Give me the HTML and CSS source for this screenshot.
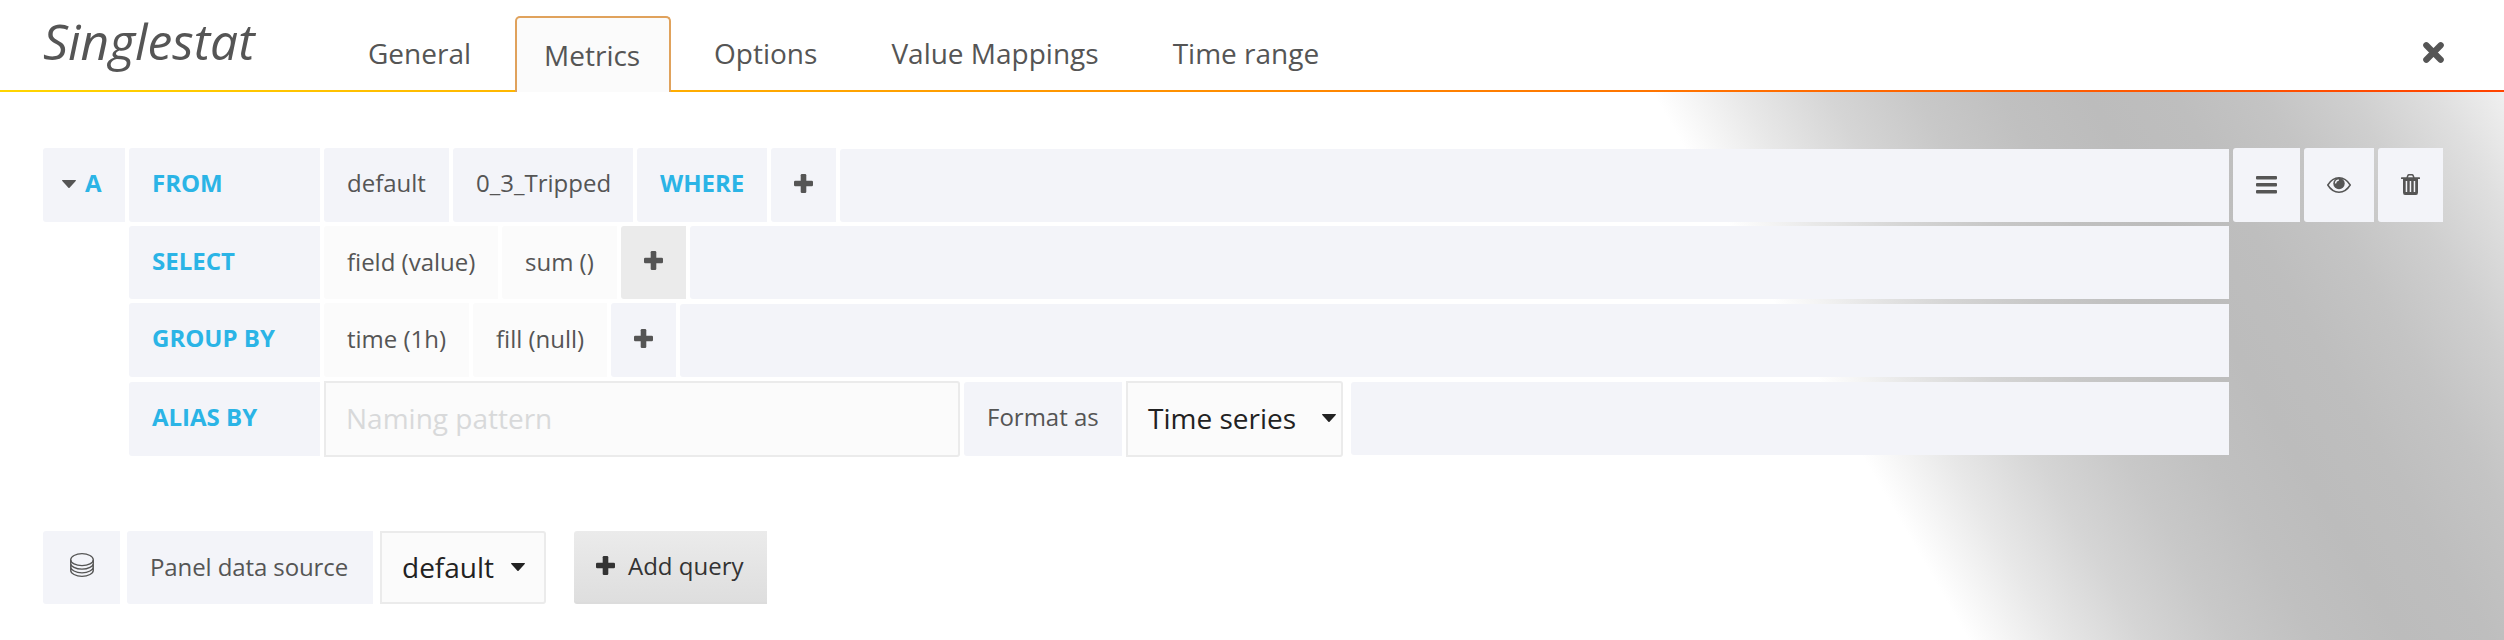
FILE: index.html
```html
<!DOCTYPE html>
<html lang="en">
<head>
  <meta charset="UTF-8">
  <title>Singlestat</title>
  <link rel="stylesheet" href="styles.css">
</head>
<body>

<svg class="sprite">
  <symbol id="plus" viewBox="0 0 19 19">
    <rect x="0" y="6.7" width="19" height="5.6" rx="1.3"/>
    <rect x="6.7" y="0" width="5.6" height="19" rx="1.3"/>
  </symbol>
  <symbol id="caret" viewBox="0 0 14 8">
    <path d="M.6 0h12.8q1 .2.3 1L7.6 7.7q-.6.5-1.2 0L.3 1Q-.4.2.6 0z"/>
  </symbol>
</svg>

<header class="editor-header">
  <h2 class="editor-title">Singlestat</h2>
  <nav class="tabs">
    <a class="tab">General</a>
    <a class="tab active">Metrics</a>
    <a class="tab">Options</a>
    <a class="tab">Value Mappings</a>
    <a class="tab">Time range</a>
  </nav>
  <svg class="close" viewBox="0 0 23 23"><path d="M4.3 4.3l14.4 14.4M18.7 4.3L4.3 18.7"/></svg>
</header>

<main class="editor-body">
  <div class="query">
    <div class="cell letter"><svg class="caret"><use href="#caret"/></svg>A</div>
    <div class="rows">
      <div class="row">
        <div class="cell keyword">FROM</div>
        <div class="cell w-policy">default</div>
        <div class="cell w-measure">0_3_Tripped</div>
        <div class="cell w-where keyword">WHERE</div>
        <div class="cell add"><svg class="plus"><use href="#plus"/></svg></div>
        <div class="cell fill short-top"></div>
      </div>
      <div class="row row-select">
        <div class="cell keyword">SELECT</div>
        <div class="cell part w-field">field (value)</div>
        <div class="cell part w-sum">sum ()</div>
        <div class="cell add hover"><svg class="plus"><use href="#plus"/></svg></div>
        <div class="cell fill"></div>
      </div>
      <div class="row">
        <div class="cell keyword">GROUP BY</div>
        <div class="cell part w-time">time (1h)</div>
        <div class="cell part w-null">fill (null)</div>
        <div class="cell add"><svg class="plus"><use href="#plus"/></svg></div>
        <div class="cell fill short-top"></div>
      </div>
      <div class="row row-alias">
        <div class="cell keyword">ALIAS BY</div>
        <input class="alias" type="text" placeholder="Naming pattern">
        <div class="cell w-format">Format as</div>
        <div class="select w-series">Time series<svg class="caret"><use href="#caret"/></svg></div>
        <div class="cell fill short-bottom"></div>
      </div>
    </div>
    <div class="actions">
      <div class="cell action-menu">
        <svg width="21" height="18" viewBox="0 0 21 18"><path d="M1 0h19q1 0 1 1v1.500q0 1-1 1H1q-1 0-1-1V1q0-1 1-1zM1 7h19q1 0 1 1v1.500q0 1-1 1H1q-1 0-1-1V8q0-1 1-1zM1 14h19q1 0 1 1v1.500q0 1-1 1H1q-1 0-1-1V15q0-1 1-1z"/></svg>
      </div>
      <div class="cell action-eye">
        <svg width="24" height="16" viewBox="0 0 24 16"><path class="line" d="M.8 8Q5.200.8 12 .8T23.200 8Q18.800 15.200 12 15.200T.8 8z"/><circle cx="12" cy="6.500" r="5.700"/><path class="glint" d="M8.500 6.500Q8.700 3.300 11.800 3"/></svg>
      </div>
      <div class="cell action-trash">
        <svg width="19" height="21" viewBox="0 0 19 21"><path class="line" d="M6 4l.8-2.300q.3-.9 1.200-.9h3q.9 0 1.200.9L13 4"/><path fill-rule="evenodd" d="M.5 3.300h18q.5 0 .5.500v.7q0 .5-.5.500H17v13.500q0 2.500-2 2.500H4q-2 0-2-2.500V5H.5Q0 5 0 4.500v-.7q0-.5.500-.5zM4.700 7v11h1.500V7zM8.700 7v11h1.500V7zM12.700 7v11h1.500V7z"/></svg>
      </div>
    </div>
  </div>

  <div class="footer">
    <div class="cell source-icon">
      <svg width="24" height="24" viewBox="0 0 24 24"><ellipse cx="12" cy="6.700" rx="11.300" ry="6"/><path d="M.7 6.700v3.500c0 3.300 5.100 6 11.300 6s11.300-2.700 11.300-6V6.700M.7 10.500v3.300c0 3.300 5.100 6 11.300 6s11.300-2.700 11.300-6v-3.300M.7 14v3.300c0 3.300 5.100 6 11.300 6s11.300-2.700 11.300-6V14"/></svg>
    </div>
    <div class="cell source-label">Panel data source</div>
    <div class="select w-source">default<svg class="caret"><use href="#caret"/></svg></div>
    <button class="add-query"><svg class="plus"><use href="#plus"/></svg>Add query</button>
  </div>
</main>

</body>
</html>
```

FILE: styles.css
```css
* {
  box-sizing: border-box;
}

body {
  margin: 0;
  height: 640px;
  overflow: hidden;
  font-family: "Open Sans", "Noto Sans", sans-serif;
  font-size: 24px;
  color: #555;
  background: #fff;
}

svg {
  display: block;
  flex: none;
  fill: currentColor;
}

.sprite {
  display: none;
}

/* Header */
.editor-header {
  display: flex;
  height: 92px;
  padding: 0 59px 0 43px;
  border-bottom: 2px solid;
  border-image: linear-gradient(to right, #ffd500 0%, #ff4400 99%, #ff4400 100%) 1;
}

.editor-title {
  width: 272px;
  margin: 0;
  font-size: 49.7px;
  font-style: italic;
  font-weight: 400;
  line-height: 83px;
}

.tabs {
  display: flex;
  flex: 1;
  font-size: 28px;
  line-height: 40px;
}

.tab {
  height: 76px;
  margin-top: 16px;
  padding: 17px 30px 0 29px;
  border: 0 solid transparent;
  border-width: 0 15px 0 0;
}

.tab:first-child {
  padding-left: 53px;
  padding-right: 29px;
}

.tab.active {
  width: 156px;
  margin-right: 14px;
  padding: 17px 0 0 27px;
  border: 2px solid #e0a25c;
  border-bottom: 0;
  border-radius: 5px 5px 0 0;
  background: #fbfbfb;
}

.close {
  width: 23px;
  height: 23px;
  margin-top: 41px;
  stroke: #555;
  stroke-width: 6.2;
  stroke-linecap: round;
}

/* Body */
.editor-body {
  height: 548px;
  padding: 56px 61px 0 43px;
  background: linear-gradient(60deg, #fff 69.8%, #e8e8e8 72.9%, #d5d5d5 76%, #c8c8c8 79.1%, #c0c0c0 82.1%, #bcbcbc 85.2%, #bebebe 88.3%, #c4c4c4 91.4%, #cfcfcf 94.5%, #dfdfdf 97.5%, #f4f4f4 100.6%);
}

.query {
  display: flex;
  gap: 4px;
}

.cell {
  display: flex;
  align-items: center;
  flex: none;
  height: 74px;
  padding: 0 0 5px 23px;
  border-radius: 3px 0 0 3px;
  background: #f3f4f9;
  white-space: nowrap;
}

.letter {
  width: 82px;
  padding-left: 19px;
  gap: 9px;
  color: #2bb4e6;
  font-weight: 700;
}

.letter .caret {
  margin-top: 3px;
  color: #555;
}

.caret {
  width: 14px;
  height: 8px;
}

.plus {
  width: 19px;
  height: 19px;
}

.rows {
  flex: 1;
  display: flex;
  flex-direction: column;
  gap: 4px;
}

.row {
  display: flex;
  gap: 4px;
  height: 74px;
}

.row-select {
  height: 73px;
}

.row-select .cell {
  height: 73px;
}

.row-alias {
  height: 76px;
  align-items: center;
}

.keyword {
  color: #2bb4e6;
  font-weight: 700;
}

.keyword:first-child {
  width: 191px;
}

.part {
  background: #fbfbfb;
  padding-bottom: 3px;
}

.w-policy { width: 125px; }
.w-measure { width: 180px; }
.w-where { width: 130px; }
.w-field { width: 174px; }
.w-sum { width: 115px; }
.w-time { width: 145px; }
.w-null { width: 134px; }
.w-format { width: 158px; padding-left: 23px; }
.w-series { width: 217px; margin-right: 4px; }
.w-source { width: 166px; }

.add {
  width: 65px;
  padding-left: 23px;
  padding-bottom: 4px;
}

.hover {
  background: #ebebeb;
}

.fill {
  flex: 1;
}

.short-top {
  height: 73px;
  margin-top: 1px;
}

.short-bottom {
  height: 73px;
  margin-bottom: 1px;
}

.alias {
  width: 636px;
  height: 76px;
  padding: 0 0 3px 20px;
  border: 2px solid #ebebeb;
  border-radius: 0 3px 3px 0;
  background: #fbfbfb;
  color: #222;
  font: 28px "Open Sans", sans-serif;
}

.alias::placeholder {
  color: #d8d9da;
}

.select {
  display: flex;
  align-items: center;
  justify-content: space-between;
  height: 76px;
  padding: 0 5px 2px 20px;
  border: 2px solid #ebebeb;
  border-radius: 0 3px 3px 0;
  background: #fbfbfb;
  color: #222;
  font-size: 28px;
  white-space: nowrap;
}

.actions {
  display: flex;
  gap: 4px;
}

.actions .cell {
  justify-content: center;
  padding: 0 1px 1px 0;
}

.action-menu { width: 67px; }
.action-eye { width: 70px; }
.action-trash { width: 65px; }

.line {
  fill: none;
  stroke: #555;
  stroke-width: 1.5;
}

.glint {
  fill: none;
  stroke: #f3f4f9;
  stroke-width: 1.3;
}

/* Data source */
.footer {
  display: flex;
  gap: 7px;
  margin-top: 74px;
}

.footer .cell,
.footer .select {
  height: 73px;
}

.source-icon {
  width: 77px;
  padding: 0 0 6px;
  justify-content: center;
}

.source-icon svg {
  fill: none;
  stroke: #555;
  stroke-width: 1.3;
}

.source-label {
  width: 246px;
  padding-bottom: 3px;
  letter-spacing: -.1px;
}

.footer .w-source {
  padding-right: 19px;
}

.add-query {
  display: flex;
  align-items: center;
  gap: 13px;
  width: 193px;
  height: 73px;
  margin-left: 21px;
  padding: 0 0 2px 22px;
  border: 0;
  border-bottom: 2px solid #dcdcdc;
  border-radius: 3px 0 0 3px;
  background: linear-gradient(#ebebeb, #dedede);
  color: #333;
  font: 24px "Open Sans", sans-serif;
  white-space: nowrap;
}
```
